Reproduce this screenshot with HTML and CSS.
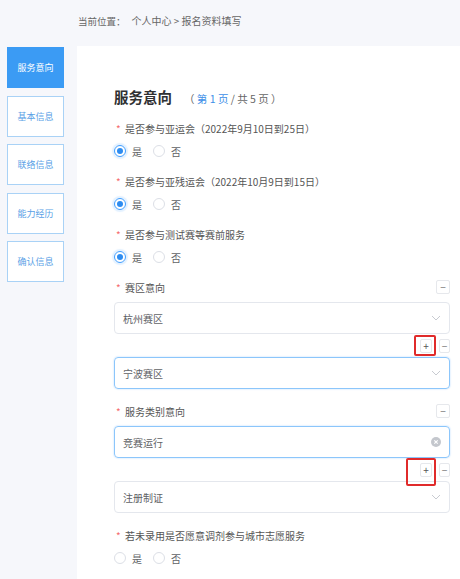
FILE: index.html
```html
<!DOCTYPE html>
<html lang="zh-CN">
<head>
<meta charset="utf-8">
<title>报名资料填写</title>
<link rel="stylesheet" href="styles.css">
</head>
<body>
<div class="crumb"><span class="crumb-key">当前位置：</span><span>个人中心 &gt; 报名资料填写</span></div>
<div class="main">
  <nav class="side">
    <div class="tab active">服务意向</div>
    <div class="tab">基本信息</div>
    <div class="tab">联络信息</div>
    <div class="tab">能力经历</div>
    <div class="tab">确认信息</div>
  </nav>
  <section class="panel">
    <div class="title">服务意向<span class="pager">（ <span class="blue">第 1 页</span> / 共 5 页 ）</span></div>

    <div class="field">
      <div class="label"><span class="star">*</span>是否参与亚运会（2022年9月10日到25日）</div>
      <div class="radios">
        <span class="radio on"></span><span class="rtext">是</span>
        <span class="radio"></span><span class="rtext">否</span>
      </div>
    </div>

    <div class="field">
      <div class="label"><span class="star">*</span>是否参与亚残运会（2022年10月9日到15日）</div>
      <div class="radios">
        <span class="radio on"></span><span class="rtext">是</span>
        <span class="radio"></span><span class="rtext">否</span>
      </div>
    </div>

    <div class="field">
      <div class="label"><span class="star">*</span>是否参与测试赛等赛前服务</div>
      <div class="radios">
        <span class="radio on"></span><span class="rtext">是</span>
        <span class="radio"></span><span class="rtext">否</span>
      </div>
    </div>

    <div class="field">
      <div class="label"><span class="star">*</span><span class="ltext">赛区意向</span><span class="btn">−</span></div>
      <div class="select"><span>杭州赛区</span><svg class="chev" width="10" height="6" viewBox="0 0 10 6"><path d="M1 1L5 5L9 1" fill="none" stroke="#c8cbd1" stroke-width="1"/></svg></div>
      <div class="actions"><span class="btn plus mark1">+</span><span class="btn small">−</span></div>
      <div class="select focus"><span>宁波赛区</span><svg class="chev" width="10" height="6" viewBox="0 0 10 6"><path d="M1 1L5 5L9 1" fill="none" stroke="#c8cbd1" stroke-width="1"/></svg></div>
    </div>

    <div class="field">
      <div class="label"><span class="star">*</span><span class="ltext">服务类别意向</span><span class="btn">−</span></div>
      <div class="select focus"><span>竞赛运行</span><svg class="clear" width="10" height="10" viewBox="0 0 10 10"><circle cx="5" cy="5" r="5" fill="#c4c7cd"/><path d="M3.3 3.3L6.7 6.7M6.7 3.3L3.3 6.7" stroke="#fff" stroke-width="1.1"/></svg></div>
      <div class="actions"><span class="btn plus mark2">+</span><span class="btn small">−</span></div>
      <div class="select"><span>注册制证</span><svg class="chev" width="10" height="6" viewBox="0 0 10 6"><path d="M1 1L5 5L9 1" fill="none" stroke="#c8cbd1" stroke-width="1"/></svg></div>
    </div>

    <div class="field">
      <div class="label"><span class="star">*</span>若未录用是否愿意调剂参与城市志愿服务</div>
      <div class="radios">
        <span class="radio"></span><span class="rtext">是</span>
        <span class="radio"></span><span class="rtext">否</span>
      </div>
    </div>
  </section>
</div>
</body>
</html>
```

FILE: styles.css
```css
* { box-sizing: border-box; }
html, body { margin: 0; padding: 0; }
body {
  background: #f6f7fb;
  font-family: "Noto Sans CJK SC", "Noto Sans", sans-serif;
  color: #606266;
  width: 460px;
  height: 579px;
  overflow: hidden;
}
.crumb {
  height: 42px;
  line-height: 42px;
  padding-left: 78px;
  font-size: 10px;
  color: #666;
}
.crumb-key { margin-right: 6px; font-size: 9.5px; }
.main {
  display: flex;
  padding-top: 4px;
  height: 537px;
}
.side {
  width: 77px;
  flex: none;
  padding: 1px 0 0 7px;
  display: flex;
  flex-direction: column;
  gap: 7.5px;
}
.tab {
  width: 57px;
  height: 41px;
  border: 1.5px solid #a9d2f6;
  background: #fff;
  color: #5a9fe6;
  font-size: 9px;
  display: flex;
  align-items: center;
  justify-content: center;
}
.tab.active {
  background: #3b9bf4;
  border-color: #3b9bf4;
  color: #fff;
}
.panel {
  flex: 1;
  background: #fff;
  padding: 40px 10px 10px 37px;
}
.title {
  height: 22px;
  line-height: 22px;
  font-size: 14.5px;
  font-weight: bold;
  color: #303133;
  margin-bottom: 12px;
}
.pager {
  margin-left: 12px;
  font-size: 10.5px;
  font-weight: normal;
  color: #666;
}
.blue { color: #3d8fe8; }
.field { margin-bottom: 14px; }
.label {
  height: 16px;
  display: flex;
  align-items: center;
  font-size: 10px;
  color: #555;
  margin-bottom: 7px;
}
.ltext { flex: 1; }
.star {
  color: #f56c6c;
  width: 11px;
  padding-left: 2px;
  font-size: 10px;
}
.radios {
  height: 16px;
  display: flex;
  align-items: center;
  font-size: 10px;
  color: #606266;
}
.radio {
  width: 12px;
  height: 12px;
  border: 1px solid #dcdfe6;
  border-radius: 50%;
  display: flex;
  align-items: center;
  justify-content: center;
}
.radio.on {
  border-color: #409eff;
  box-shadow: 0 0 1px 2px rgba(64, 158, 255, 0.15);
}
.radio.on::after {
  content: "";
  width: 6px;
  height: 6px;
  border-radius: 50%;
  background: #2d8cf0;
}
.rtext { margin: 0 11px 0 6px; }
.select {
  height: 32px;
  border: 1px solid #e4e7ed;
  border-radius: 4px;
  display: flex;
  align-items: center;
  justify-content: space-between;
  padding: 0 8px 0 8px;
  font-size: 10px;
  color: #606266;
}
.select.focus {
  border-color: #8cc6fb;
  box-shadow: 0 0 1px 1px rgba(64, 158, 255, 0.12);
}
.actions {
  height: 23px;
  display: flex;
  justify-content: flex-end;
  align-items: center;
  gap: 7px;
}
.btn {
  width: 14px;
  height: 14px;
  border: 1px solid #e6e8ec;
  border-radius: 2px;
  display: flex;
  align-items: center;
  justify-content: center;
  font-size: 10px;
  line-height: 1;
  color: #777;
  background: #fff;
  flex: none;
}
.btn.small { width: 11px; }
.btn.plus {
  position: relative;
  width: 12px;
  color: #555;
}
.btn.plus::after {
  content: "";
  position: absolute;
  border: 2px solid #e02b2b;
  border-radius: 2px;
}
.mark1::after { left: -7px; right: -5px; top: -5px; bottom: -4px; }
.mark2::after { left: -15px; right: -5px; top: -6px; bottom: -10px; }
```
